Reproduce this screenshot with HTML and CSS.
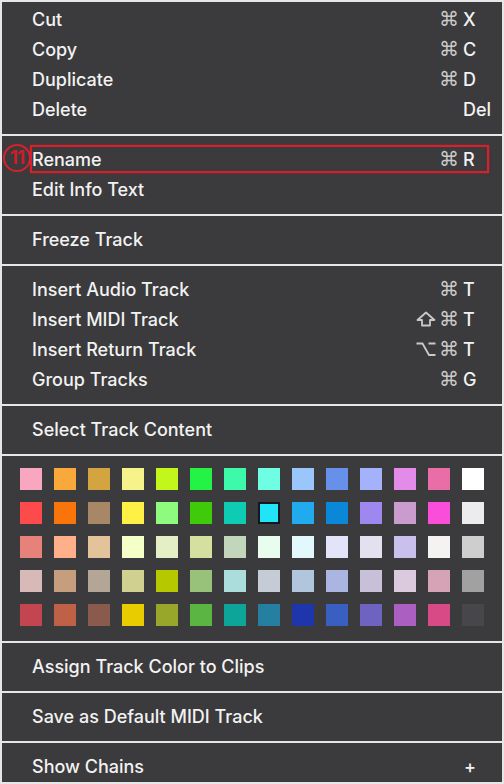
FILE: index.html
```html
<!DOCTYPE html>
<html lang="en">
<head>
    <meta charset="UTF-8">
    <meta name="viewport" content="width=device-width, initial-scale=1.0">
    <title>Track Context Menu</title>
    <link rel="stylesheet" href="styles.css">
</head>
<body>
    <div class="menu">
        <div class="section first">
            <div class="item"><span class="label">Cut</span><span class="mods"><span class="cmd">⌘</span></span><span class="key">X</span></div>
            <div class="item"><span class="label">Copy</span><span class="mods"><span class="cmd">⌘</span></span><span class="key">C</span></div>
            <div class="item"><span class="label">Duplicate</span><span class="mods"><span class="cmd">⌘</span></span><span class="key">D</span></div>
            <div class="item"><span class="label">Delete</span><span class="mods"></span><span class="key">Del</span></div>
        </div>
        <div class="section">
            <div class="item marked">
                <span class="label">Rename</span><span class="mods"><span class="cmd">⌘</span></span><span class="key">R</span>
                <span class="callout"></span>
                <span class="badge">11</span>
            </div>
            <div class="item"><span class="label">Edit Info Text</span></div>
        </div>
        <div class="section">
            <div class="item"><span class="label">Freeze Track</span></div>
        </div>
        <div class="section">
            <div class="item"><span class="label">Insert Audio Track</span><span class="mods"><span class="cmd">⌘</span></span><span class="key">T</span></div>
            <div class="item">
                <span class="label">Insert MIDI Track</span>
                <span class="mods">
                    <svg class="mod-icon" width="20" height="16" viewBox="0 0 20 16"><path d="M10 1.5 L18.5 9 H14 V14.5 H6 V9 H1.5 Z" fill="none" stroke="#c9c9c9" stroke-width="1.8" stroke-linejoin="round"/></svg>
                    <span class="cmd">⌘</span>
                </span>
                <span class="key">T</span>
            </div>
            <div class="item">
                <span class="label">Insert Return Track</span>
                <span class="mods">
                    <svg class="mod-icon" width="20" height="16" viewBox="0 0 20 16"><path d="M0.5 2.5 H6.5 L13 14 H19.5 M12.5 2.5 H19.5" fill="none" stroke="#c9c9c9" stroke-width="1.8"/></svg>
                    <span class="cmd">⌘</span>
                </span>
                <span class="key">T</span>
            </div>
            <div class="item"><span class="label">Group Tracks</span><span class="mods"><span class="cmd">⌘</span></span><span class="key">G</span></div>
        </div>
        <div class="section">
            <div class="item"><span class="label">Select Track Content</span></div>
        </div>
        <div class="section palette">
            <div class="swatch" style="background:#f9a6c0"></div>
            <div class="swatch" style="background:#f9a93c"></div>
            <div class="swatch" style="background:#d3a43f"></div>
            <div class="swatch" style="background:#f7f38b"></div>
            <div class="swatch" style="background:#c3f71c"></div>
            <div class="swatch" style="background:#24f244"></div>
            <div class="swatch" style="background:#3dfaaa"></div>
            <div class="swatch" style="background:#6ffde3"></div>
            <div class="swatch" style="background:#9ac6fb"></div>
            <div class="swatch" style="background:#6690e9"></div>
            <div class="swatch" style="background:#a4b1fb"></div>
            <div class="swatch" style="background:#e38be8"></div>
            <div class="swatch" style="background:#e96ea8"></div>
            <div class="swatch" style="background:#ffffff"></div>

            <div class="swatch" style="background:#fd4a4b"></div>
            <div class="swatch" style="background:#f9750c"></div>
            <div class="swatch soft" style="background:#a88767"></div>
            <div class="swatch" style="background:#fef045"></div>
            <div class="swatch" style="background:#8efb7f"></div>
            <div class="swatch" style="background:#3fcb0a"></div>
            <div class="swatch soft" style="background:#0ecbb4"></div>
            <div class="swatch selected" style="background:#22e4f7"></div>
            <div class="swatch soft" style="background:#22aaef"></div>
            <div class="swatch soft" style="background:#0b87d8"></div>
            <div class="swatch" style="background:#9e88f0"></div>
            <div class="swatch" style="background:#c99ccd"></div>
            <div class="swatch" style="background:#fa4dd9"></div>
            <div class="swatch" style="background:#ececee"></div>

            <div class="swatch" style="background:#e6827a"></div>
            <div class="swatch" style="background:#ffb08a"></div>
            <div class="swatch" style="background:#e2c39a"></div>
            <div class="swatch" style="background:#f5ffc8"></div>
            <div class="swatch" style="background:#e5efc6"></div>
            <div class="swatch" style="background:#d5dfa0"></div>
            <div class="swatch" style="background:#c2d6bb"></div>
            <div class="swatch" style="background:#e8fdee"></div>
            <div class="swatch" style="background:#e3f8fd"></div>
            <div class="swatch" style="background:#e3e4f9"></div>
            <div class="swatch" style="background:#e3e1ef"></div>
            <div class="swatch" style="background:#c9c0ee"></div>
            <div class="swatch" style="background:#f5f3f1"></div>
            <div class="swatch" style="background:#cececf"></div>

            <div class="swatch" style="background:#d7b9b8"></div>
            <div class="swatch" style="background:#c79e7d"></div>
            <div class="swatch" style="background:#b3a696"></div>
            <div class="swatch" style="background:#d0d090"></div>
            <div class="swatch" style="background:#b6c900"></div>
            <div class="swatch" style="background:#98c27a"></div>
            <div class="swatch" style="background:#aadddc"></div>
            <div class="swatch" style="background:#c5ccd6"></div>
            <div class="swatch" style="background:#b1c6dd"></div>
            <div class="swatch" style="background:#aab5e1"></div>
            <div class="swatch" style="background:#c8bfd8"></div>
            <div class="swatch" style="background:#dbc9dd"></div>
            <div class="swatch" style="background:#d5a2b6"></div>
            <div class="swatch" style="background:#a1a1a1"></div>

            <div class="swatch soft" style="background:#c2454f"></div>
            <div class="swatch soft" style="background:#be6147"></div>
            <div class="swatch soft" style="background:#8a5a4c"></div>
            <div class="swatch" style="background:#e8cc00"></div>
            <div class="swatch" style="background:#98a62a"></div>
            <div class="swatch" style="background:#5ab542"></div>
            <div class="swatch soft" style="background:#0da49a"></div>
            <div class="swatch soft" style="background:#247fa0"></div>
            <div class="swatch" style="background:#1e35ab"></div>
            <div class="swatch soft" style="background:#3a5fc3"></div>
            <div class="swatch" style="background:#6e63c1"></div>
            <div class="swatch soft" style="background:#ab5fc0"></div>
            <div class="swatch" style="background:#d84a85"></div>
            <div class="swatch" style="background:#47464a"></div>
        </div>
        <div class="section">
            <div class="item"><span class="label">Assign Track Color to Clips</span></div>
        </div>
        <div class="section">
            <div class="item"><span class="label">Save as Default MIDI Track</span></div>
        </div>
        <div class="section last">
            <div class="item"><span class="label">Show Chains</span><span class="mods"></span><span class="key plus">+</span></div>
        </div>
    </div>
</body>
</html>
```

FILE: styles.css
```css
body {
    margin: 0;
    background: #e6e6e6;
    font-family: "Inter", "Liberation Sans", sans-serif;
}

.menu {
    width: 504px;
    height: 784px;
    box-sizing: border-box;
    padding: 2px;
    display: flex;
    flex-direction: column;
    gap: 2px;
    overflow: hidden;
    background: #e6e6e6;
}

.section {
    background: #3b3a3c;
    padding: 8px 0 10px;
    flex-shrink: 0;
}

.section.first {
    padding-top: 2px;
}

.section.last {
    height: 39px;
    box-sizing: border-box;
    flex-shrink: 1;
    overflow: hidden;
}

.item {
    display: grid;
    grid-template-columns: 1fr auto 31px;
    column-gap: 4px;
    align-items: center;
    height: 30px;
    padding: 0 8px 0 30px;
    color: #f2f2f2;
    font-size: 18px;
    font-weight: 500;
}

.mods {
    display: flex;
    align-items: center;
    justify-content: flex-end;
    gap: 3px;
}

.cmd {
    font-family: "DejaVu Sans", sans-serif;
    font-size: 20px;
    line-height: 1;
    color: #c9c9c9;
}

.mod-icon {
    display: block;
}

.key {
    font-size: 18px;
}

.key.plus {
    padding-left: 1px;
}

/* annotation marking the Rename entry */
.marked {
    position: relative;
}

.callout {
    position: absolute;
    left: 28px;
    top: 1px;
    width: 455px;
    height: 24px;
    border: 2px solid #d8202c;
    box-shadow: 0 0 2px rgba(216, 32, 44, 0.6);
}

.badge {
    position: absolute;
    left: 1px;
    top: 0;
    width: 24px;
    height: 24px;
    border: 2px solid #d8202c;
    border-radius: 50%;
    color: #c8202a;
    font-size: 19px;
    font-weight: 700;
    letter-spacing: -1px;
    line-height: 24px;
    text-align: center;
}

.palette {
    display: grid;
    grid-template-columns: repeat(14, 22px);
    grid-auto-rows: 22px;
    gap: 12px;
    padding: 12px 18px 15px;
}

.swatch {
    width: 22px;
    height: 22px;
}

.swatch.soft {
    filter: blur(0.6px);
}

.swatch.selected {
    box-sizing: border-box;
    border: 2px solid #12161e;
}
```
